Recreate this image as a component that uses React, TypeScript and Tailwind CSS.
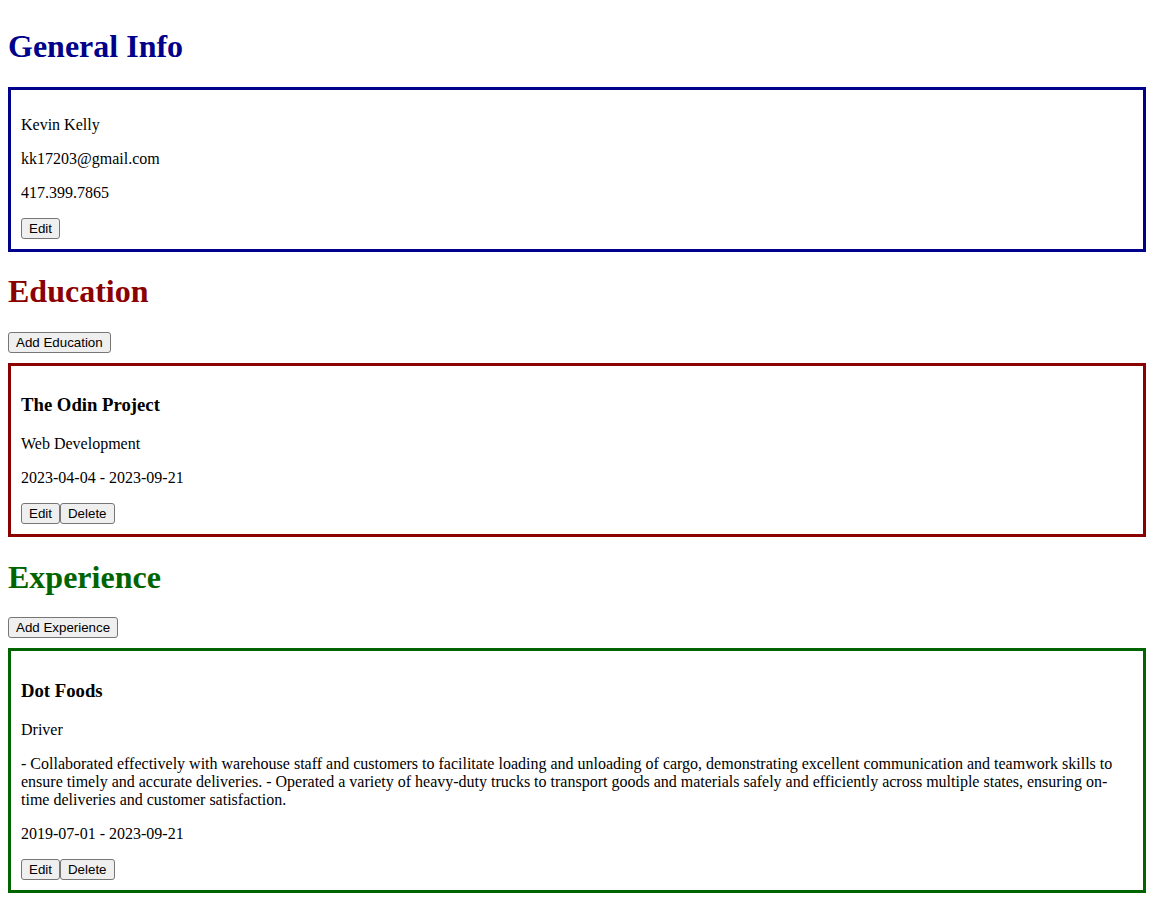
const general = {
  name: 'Kevin Kelly',
  email: 'kk17203@gmail.com',
  phone: '417.399.7865',
};

const education = [
  {
    school: 'The Odin Project',
    study: 'Web Development',
    from: '2023-04-04',
    to: '2023-09-21',
  },
];

const experience = [
  {
    company: 'Dot Foods',
    title: 'Driver',
    description:
      '- Collaborated effectively with warehouse staff and customers to facilitate loading and unloading of cargo, demonstrating excellent communication and teamwork skills to ensure timely and accurate deliveries. - Operated a variety of heavy-duty trucks to transport goods and materials safely and efficiently across multiple states, ensuring on-time deliveries and customer satisfaction.',
    from: '2019-07-01',
    to: '2023-09-21',
  },
];

function Button({ children }: { children: React.ReactNode }) {
  return (
    <button className="h-[21px] rounded-[3px] border border-[#767676] bg-[#efefef] px-[7px] font-['Liberation_Sans',Arial,sans-serif] text-[13.333px] leading-[normal] text-black">
      {children}
    </button>
  );
}

function Heading({ children, color }: { children: React.ReactNode; color: string }) {
  return <h1 className={`my-[21.44px] text-[32px] font-bold leading-[normal] ${color}`}>{children}</h1>;
}

function Text({ children }: { children: React.ReactNode }) {
  return <p className="my-4 text-base leading-[normal]">{children}</p>;
}

export default function App() {
  return (
    <div className="min-h-[899px] bg-white pl-2 pr-[3px] pt-[7px] font-['Liberation_Serif','Times_New_Roman',serif] text-black">
      <Heading color="text-[#00008b]">General Info</Heading>
      <div className="mt-[10px] border-[3px] border-[#00008b] p-[10px]">
        <Text>{general.name}</Text>
        <Text>{general.email}</Text>
        <Text>{general.phone}</Text>
        <div className="flex">
          <Button>Edit</Button>
        </div>
      </div>

      <Heading color="text-[#8b0000]">Education</Heading>
      <div className="flex">
        <Button>Add Education</Button>
      </div>
      {education.map((item) => (
        <div key={item.school} className="mt-[10px] border-[3px] border-[#8b0000] p-[10px]">
          <h3 className="my-[18.72px] text-[18.72px] font-bold leading-[normal]">{item.school}</h3>
          <Text>{item.study}</Text>
          <Text>
            {item.from} - {item.to}
          </Text>
          <div className="flex">
            <Button>Edit</Button>
            <Button>Delete</Button>
          </div>
        </div>
      ))}

      <Heading color="text-[#006400]">Experience</Heading>
      <div className="flex">
        <Button>Add Experience</Button>
      </div>
      {experience.map((item) => (
        <div key={item.company} className="mt-[10px] border-[3px] border-[#006400] p-[10px]">
          <h3 className="my-[18.72px] text-[18.72px] font-bold leading-[normal]">{item.company}</h3>
          <Text>{item.title}</Text>
          <Text>{item.description}</Text>
          <Text>
            {item.from} - {item.to}
          </Text>
          <div className="flex">
            <Button>Edit</Button>
            <Button>Delete</Button>
          </div>
        </div>
      ))}
    </div>
  );
}
